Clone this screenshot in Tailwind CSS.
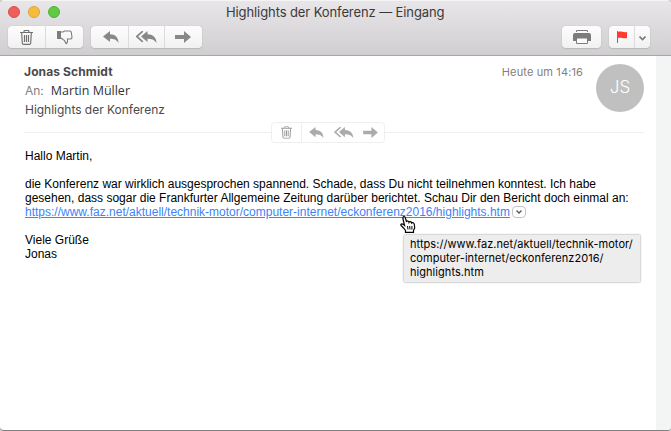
<!DOCTYPE html>
<html lang="de">
<head>
<meta charset="utf-8">
<title>Highlights der Konferenz — Eingang</title>
<script src="https://cdn.jsdelivr.net/npm/@tailwindcss/browser@4"></script>
</head>
<body class="h-[431px] w-[671px] overflow-hidden bg-[#d0d0d0] font-['Inter',sans-serif]">
<svg class="hidden">
  <symbol id="trash" viewBox="0 0 13 15"><path d="M0 2.500H13M4 2.500V1.500Q4 .5 5 .5H8Q9 .5 9 1.500V2.500M1.700 3L2.300 13Q2.400 14.400 3.600 14.400H9.400Q10.600 14.400 10.700 13L11.300 3M4.500 5V12M6.500 5V12M8.500 5V12" fill="none" stroke="currentColor" stroke-width="1.150"/></symbol>
  <symbol id="reply" viewBox="0 0 16 13"><path d="M0 5.500 7 0v3.300c5 0 8.500 3 8.500 8.700-2-3.300-4.500-4.200-8.500-4.200V11z" fill="currentColor"/></symbol>
  <symbol id="replyall" viewBox="0 0 21 13"><path d="M5 5.500 11.500 0v3.300c5 0 9 3 9 8.700-2-3.300-5-4.200-9-4.200V11z" fill="currentColor"/><path d="M6.800.2.800 5.500l6 5.300" fill="none" stroke="currentColor" stroke-width="1.700"/></symbol>
  <symbol id="forward" viewBox="0 0 16 12"><path d="M0 4h9V0l7 6-7 6V8H0z" fill="currentColor"/></symbol>
</svg>
<div class="flex h-[431px] w-[671px] flex-col overflow-hidden rounded-t-[5px] rounded-b-[4px] border-b border-[#808080] bg-white">
  <header class="flex h-14 shrink-0 flex-col border-t border-b border-t-[#f5f4f5] border-b-[#a7a5a7] bg-linear-to-b from-[#e8e6e8] to-[#d0ced0]">
    <div class="grid h-[25px] grid-cols-[226px_1fr_220px] items-start">
      <div class="flex gap-2 pt-[5px] pl-2">
        <span class="size-3 rounded-full border border-[#dc4e49] bg-[#ed5f5a]"></span>
        <span class="size-3 rounded-full border border-[#dda434] bg-[#f6bd3d]"></span>
        <span class="size-3 rounded-full border border-[#50b334] bg-[#62c944]"></span>
      </div>
      <h1 class="pt-[3px] text-[13px] leading-4 tracking-[-0.1px] whitespace-nowrap text-[#3b3a3b]">Highlights der Konferenz — Eingang</h1>
    </div>
    <div class="flex h-[22px] pl-2 text-[#7c7c7c]">
      <div class="flex w-[75px] divide-x divide-[#dcdcdc] rounded bg-linear-to-b from-[#fdfdfd] to-[#f1f1f1] shadow-[0_0_1px_#aaa,0_1px_1px_#bbb]">
        <span class="flex w-[38px] items-center justify-center text-[#707070]"><svg class="h-[15px] w-[13px]"><use href="#trash"/></svg></span>
        <span class="flex flex-1 items-center justify-center"><svg class="h-[15px] w-4" viewBox="0 0 16 15"><path d="M0 1H4V9H0z" fill="currentColor"/><path d="M4 2H6L7.500 1H13Q14.300 1 14.300 2.500L15 7Q15 9 13.500 9H10.500Q11 12 9.500 13.700Q8.300 13.500 8.200 12Q7.500 10 6 9.500L4 8" fill="none" stroke="currentColor" stroke-width="1.100"/></svg></span>
      </div>
      <div class="ml-2 flex w-[111px] divide-x divide-[#dcdcdc] rounded bg-linear-to-b from-[#fdfdfd] to-[#f1f1f1] text-[#888] shadow-[0_0_1px_#aaa,0_1px_1px_#bbb]">
        <span class="flex w-[38px] items-center justify-center pl-[3px]"><svg class="h-[13px] w-4"><use href="#reply"/></svg></span>
        <span class="flex w-9 items-center justify-center"><svg class="h-[13px] w-[21px]"><use href="#replyall"/></svg></span>
        <span class="flex flex-1 items-center justify-center pr-0.5"><svg class="h-3 w-4"><use href="#forward"/></svg></span>
      </div>
      <div class="ml-auto flex w-[39px] items-center justify-center rounded bg-linear-to-b from-[#fdfdfd] to-[#f1f1f1] shadow-[0_0_1px_#aaa,0_1px_1px_#bbb]">
        <svg class="h-[14px] w-[18px]" viewBox="0 0 18 14"><path d="M3.500 2V.5h11V2" fill="none" stroke="currentColor"/><path d="M2 3h14q2 0 2 2v6h-3V8H3v3H0V5q0-2 2-2z" fill="currentColor"/><path d="M3.500 8h11v5.500h-11z" fill="#fafafa" stroke="currentColor"/></svg>
      </div>
      <div class="mr-[21px] ml-2 flex w-[41px] divide-x divide-[#dcdcdc] rounded bg-linear-to-b from-[#fdfdfd] to-[#f1f1f1] shadow-[0_0_1px_#aaa,0_1px_1px_#bbb]">
        <span class="flex w-[26px] items-center justify-center"><svg class="h-3 w-[10px]" viewBox="0 0 10 12"><path d="M0 0h1v1c3-1.500 5 1 9 0v6c-4 1-6-1-9 0v5H0z" fill="#ff3b30"/></svg></span>
        <span class="flex flex-1 items-center justify-center pt-0.5"><svg class="h-[5px] w-[7px]" viewBox="0 0 7 5"><path d="M.5.500 3.500 3.500 6.500.500" fill="none" stroke="currentColor" stroke-width="1.700"/></svg></span>
      </div>
    </div>
  </header>
  <div class="flex flex-1">
    <main class="w-[656px] pt-2 pr-3 pl-[25px]">
      <section class="flex h-[60px]">
        <div class="text-[#4a4a4a]">
          <p class="-ml-px text-[12px] leading-4 font-bold tracking-[0.12px]">Jonas Schmidt</p>
          <p class="mt-[3px] flex gap-[7px] leading-4"><span class="text-[12px] text-[#808080]">An:</span><span class="font-['Open_Sans',sans-serif] text-[12.5px] text-[#333]">Martin Müller</span></p>
          <p class="mt-[3px] text-[12px] leading-4 tracking-[-0.02px]">Highlights der Konferenz</p>
        </div>
        <time class="ml-auto text-[11px] leading-4 tracking-[0.13px] text-[#808080]">Heute um 14:16</time>
        <div class="ml-[13px] flex size-12 items-center justify-center rounded-full bg-[#c0c0c0] text-[17px] font-light text-white">JS</div>
      </section>
      <div class="-ml-px flex h-[17px] items-center text-[#ababab]">
        <span class="h-px w-[247px] bg-[#f0f0f0]"></span>
        <div class="flex h-[21px] w-[114px] shrink-0 rounded border border-[#efefef]">
          <span class="flex w-[30px] items-center justify-center border-r border-[#efefef] text-[#999]"><svg class="h-[13px] w-[11px]" viewBox="0 0 13 15"><use href="#trash"/></svg></span>
          <span class="flex flex-1 items-center justify-between pr-1.5 pl-[7px]"><svg class="h-3 w-[15px]"><use href="#reply"/></svg><svg class="h-3 w-5"><use href="#replyall"/></svg><svg class="h-[11px] w-[15px]"><use href="#forward"/></svg></span>
        </div>
        <span class="h-px flex-1 bg-[#f0f0f0]"></span>
      </div>
      <article class="mt-2 font-['Liberation_Sans',sans-serif] text-[12px] leading-[14px] whitespace-nowrap text-black">
        <p>Hallo Martin,</p>
        <p class="mt-[14px]">die Konferenz war wirklich ausgesprochen spannend. Schade, dass Du nicht teilnehmen konntest. Ich habe<br>gesehen, dass sogar die Frankfurter Allgemeine Zeitung darüber berichtet. Schau Dir den Bericht doch einmal an:</p>
        <p class="flex items-center text-[#4182f7]"><a class="underline underline-offset-1">https://www.faz.net/aktuell/technik-motor/computer-internet/eckonferenz2016/highlights.htm</a><span class="ml-0.5 flex h-3 w-[14px] items-center justify-center rounded border border-[#c4c4c4] text-[#555]"><svg class="h-1 w-1.5" viewBox="0 0 6 4"><path d="M.5.500 3 3 5.500.500" fill="none" stroke="currentColor" stroke-width="1.300"/></svg></span></p>
        <p class="mt-[14px]">Viele Grüße<br>Jonas</p>
      </article>
    </main>
    <aside class="flex-1 bg-[#f3f4f4]"></aside>
  </div>
</div>
<svg class="absolute top-[216px] left-[400px] h-[17px] w-4" viewBox="0 0 16 17"><path d="M5.500 16.300V14.500L3.500 12L1 9.500Q.5 8 2 7.800Q3 7.800 4.500 9.300L3 3Q2.600 1 3.800.7Q5 .5 5.400 2L6.600 6Q6.800 4.800 7.800 5Q8.800 5.200 9 6.300Q9.500 5.300 10.500 5.600Q11.500 6 11.700 7Q12.300 6.300 13.300 6.800Q14.200 7.300 14.400 9L14.700 12L13.500 14.500V16.300z" fill="white" stroke="black" stroke-width="1.200"/><path d="M7.500 10L8 13.500M9.700 10L10 13.500M11.900 10V13.500" stroke="black" stroke-width="1"/></svg>
<div class="absolute top-[235px] left-[404px] h-[47px] w-[236px] bg-[#ededed] pt-0.5 pl-1.5 text-[11px] leading-[14px] tracking-[0.05px] whitespace-nowrap text-black shadow-[0_0_2px_#888]">https://www.faz.net/aktuell/technik-motor/<br>computer-internet/eckonferenz2016/<br>highlights.htm</div>
</body>
</html>
